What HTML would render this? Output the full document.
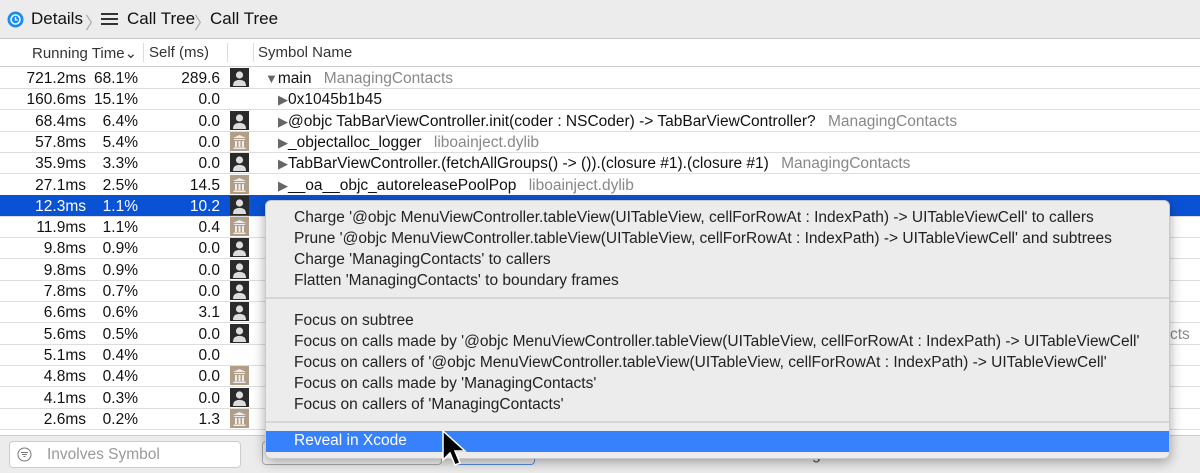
<!DOCTYPE html><html><head><style>
body{margin:0;width:1200px;height:472px;overflow:hidden;background:#fff;font-family:"Liberation Sans",sans-serif;font-size:15.5px;color:#111;position:relative}
.top{position:absolute;left:0;top:0;width:1200px;height:38px;background:#ececec;border-bottom:1px solid #c8c8c8}
.top span{position:absolute;top:9px;font-size:17px}
.hdr{position:absolute;top:39px;left:0;width:1200px;height:27px;background:#fff;border-bottom:1px solid #d0d0d0;color:#333}
.hdr span{position:absolute;top:5px;font-size:15px}
.vs{position:absolute;top:43px;width:1px;height:19px;background:#ddd}
.row{position:absolute;left:0;width:1200px;height:21px;border-bottom:1px solid #ddd}
.row span{position:absolute;top:3px;white-space:nowrap}
.r{text-align:right}
.sel{background:#0a52d4;color:#fff}
.ic{position:absolute;left:230px;top:1px;width:19px;height:19px}
.g{color:#888}
.t{color:#666;font-size:13px}
.menu{position:absolute;left:265px;top:200px;width:903px;height:257px;background:#ececec;border-radius:6px;box-shadow:0 3px 12px rgba(0,0,0,.35);border:1px solid #c9c9c9}
.menu div{position:absolute;left:28px;font-size:15.5px;color:#222;white-space:nowrap}
.sep{height:2px;background:#d6d6d6;left:0!important;width:903px}
.bot{position:absolute;left:0;top:435px;width:1200px;height:37px;background:#ececec;border-top:1px solid #ccc}
</style></head><body>
<div class="top">
<svg style="position:absolute;left:7px;top:11px" width="17" height="17"><circle cx="8.5" cy="8.5" r="8" fill="#1a8cf0"/><circle cx="8.5" cy="8.5" r="4.5" fill="none" stroke="#fff" stroke-width="1.5"/><path d="M8.5 6v3h2" stroke="#fff" stroke-width="1.3" fill="none"/></svg>
<span style="left:31px">Details</span><span style="left:85px;color:#aaa">〉</span>
<svg style="position:absolute;left:101px;top:12px" width="17" height="14"><path d="M0 2h17M0 7h17M0 12h17" stroke="#333" stroke-width="2"/></svg>
<span style="left:127px">Call Tree</span><span style="left:194px;color:#aaa">〉</span><span style="left:210px">Call Tree</span>
</div>
<div class="hdr"><span style="left:32px">Running Time⌄</span><span style="left:149px">Self (ms)</span><span style="left:258px">Symbol Name</span></div>
<div class="vs" style="left:143px"></div><div class="vs" style="left:227px"></div><div class="vs" style="left:253px"></div>
<div id="rows"></div>
<script>
var d=[["721.2ms","68.1%","289.6","u","<span class='t' style='position:static'>▼</span>main","ManagingContacts",265],
["160.6ms","15.1%","0.0","","<span class='t' style='position:static'>▶</span>0x1045b1b45","",278],
["68.4ms","6.4%","0.0","u","<span class='t' style='position:static'>▶</span>@objc TabBarViewController.init(coder : NSCoder) -> TabBarViewController?","ManagingContacts",278],
["57.8ms","5.4%","0.0","l","<span class='t' style='position:static'>▶</span>_objectalloc_logger","liboainject.dylib",278],
["35.9ms","3.3%","0.0","u","<span class='t' style='position:static'>▶</span>TabBarViewController.(fetchAllGroups() -> ()).(closure #1).(closure #1)","ManagingContacts",278],
["27.1ms","2.5%","14.5","l","<span class='t' style='position:static'>▶</span>__oa__objc_autoreleasePoolPop","liboainject.dylib",278],
["12.3ms","1.1%","10.2","u","","",278],
["11.9ms","1.1%","0.4","l","","",278],
["9.8ms","0.9%","0.0","u","","",278],
["9.8ms","0.9%","0.0","u","","",278],
["7.8ms","0.7%","0.0","u","","",278],
["6.6ms","0.6%","3.1","u","","",278],
["5.6ms","0.5%","0.0","u","","",278],
["5.1ms","0.4%","0.0","","","",278],
["4.8ms","0.4%","0.0","l","","",278],
["4.1ms","0.3%","0.0","u","","",278],
["2.6ms","0.2%","1.3","l","","",278]];
var h="";
d.forEach(function(r,i){
var t=67+i*21.3;
var ic="";
if(r[3]=="u")ic='<svg class="ic" viewBox="0 0 19 19"><rect width="19" height="19" fill="#2a2a2a"/><circle cx="9.5" cy="7" r="3.6" fill="#ddd"/><path d="M3 18c0-5 3-6 6.5-6s6.5 1 6.5 6z" fill="#ddd"/></svg>';
if(r[3]=="l")ic='<svg class="ic" viewBox="0 0 19 19"><rect width="19" height="19" fill="#b29d87"/><path d="M3 6l6.5-3 6.5 3zM4 7h11v1H4zM5 9h2v6H5zM8.5 9h2v6h-2zM12 9h2v6h-2zM3.5 15.5h12v1.5h-12z" fill="#eee"/></svg>';
h+='<div class="row'+(i==6?' sel':'')+'" style="top:'+t+'px">'+
'<span class="r" style="right:1114px">'+r[0]+'</span><span class="r" style="right:1062px">'+r[1]+'</span><span class="r" style="right:980px">'+r[2]+'</span>'+ic+
'<span style="left:'+r[6]+'px">'+r[4]+' <span class="g" style="position:static;margin-left:8px">'+r[5]+'</span></span>'+(i==12?'<span class="g" style="left:1170px">cts</span>':'')+'</div>';
});
document.getElementById("rows").innerHTML=h;
</script>
<div class="bot">
<div style="position:absolute;left:9px;top:5px;width:230px;height:25px;background:#fff;border:1px solid #ccc;border-radius:4px"></div>
<svg style="position:absolute;left:17px;top:11px" width="15" height="15"><circle cx="7.5" cy="7.5" r="6.5" fill="none" stroke="#777"/><path d="M4 5.5h7M5 7.5h5M6.5 9.5h2" stroke="#777"/></svg>
<span style="position:absolute;left:47px;top:10px;color:#999">Involves Symbol</span>
<div style="position:absolute;left:262px;top:5px;width:178px;height:22px;border:1px solid #aaa;border-radius:4px;background:#f7f7f7"></div>
<div style="position:absolute;left:455px;top:5px;width:78px;height:22px;border:1px solid #5b8fe0;border-radius:4px"></div>
<span style="position:absolute;left:560px;top:10px;color:#444">Call Tree Constraints</span>
<span style="position:absolute;left:738px;top:10px;color:#444">Data Mining</span>
</div>
<div class="menu">
<div style="top:8px">Charge '@objc MenuViewController.tableView(UITableView, cellForRowAt : IndexPath) -> UITableViewCell' to callers</div>
<div style="top:29px">Prune '@objc MenuViewController.tableView(UITableView, cellForRowAt : IndexPath) -> UITableViewCell' and subtrees</div>
<div style="top:50px">Charge 'ManagingContacts' to callers</div>
<div style="top:71px">Flatten 'ManagingContacts' to boundary frames</div>
<div class="sep" style="top:96px"></div>
<div style="top:111px">Focus on subtree</div>
<div style="top:132px">Focus on calls made by '@objc MenuViewController.tableView(UITableView, cellForRowAt : IndexPath) -> UITableViewCell'</div>
<div style="top:153px">Focus on callers of '@objc MenuViewController.tableView(UITableView, cellForRowAt : IndexPath) -> UITableViewCell'</div>
<div style="top:174px">Focus on calls made by 'ManagingContacts'</div>
<div style="top:195px">Focus on callers of 'ManagingContacts'</div>
<div class="sep" style="top:220px"></div>
<div style="top:230px;left:0;width:903px;height:21px;background:#3781fd"></div>
<div style="top:231px;color:#fff">Reveal in Xcode</div>
</div>
<svg style="position:absolute;left:441px;top:430px" width="26" height="40"><path d="M2 1v29l7-7 5 12 5-2-5-12h10z" fill="#000" stroke="#fff" stroke-width="1.5"/></svg>
</body></html>
